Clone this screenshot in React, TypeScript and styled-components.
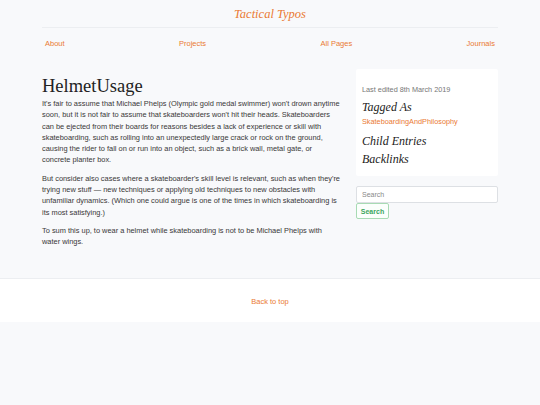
import * as React from 'react';
import styled, { createGlobalStyle } from 'styled-components';

const orange = '#ea7a33';

const Global = createGlobalStyle`
  html, body {
    margin: 0;
    padding: 0;
    background: #f8f9fb;
    font-family: 'Liberation Sans', Arial, sans-serif;
  }
`;

const Page = styled.div`
  min-height: 405px;
  background: #f8f9fb;
`;

const Container = styled.div`
  width: 456px;
  margin: 0 auto;
`;

const SiteTitle = styled.div`
  font-family: 'Liberation Serif', Georgia, serif;
  font-style: italic;
  font-size: 12.5px;
  color: ${orange};
  text-align: center;
  padding-top: 6px;
  height: 21px;
  line-height: 16px;
  border-bottom: 1px solid #eceef1;
`;

const Nav = styled.nav`
  display: flex;
  justify-content: space-between;
  padding: 11px 3px 0 3px;
  height: 19px;
`;

const NavLink = styled.a`
  font-size: 7.5px;
  color: ${orange};
  text-decoration: none;
  line-height: 10px;
`;

const Main = styled.div`
  display: flex;
  gap: 11px;
  padding-top: 11px;
  padding-bottom: 23px;
`;

const Article = styled.article`
  flex: 1;
  padding-top: 6px;
`;

const Heading = styled.h1`
  font-family: 'Liberation Serif', Georgia, serif;
  font-weight: normal;
  font-size: 18.5px;
  line-height: 22px;
  color: #222;
  margin: 0 0 1px 0;
`;

const Para = styled.p`
  font-size: 7.42px;
  line-height: 11.3px;
  color: #383838;
  margin: 0 0 7px 0;
  white-space: nowrap;
`;

const Sidebar = styled.aside`
  width: 142px;
  flex-shrink: 0;
`;

const Card = styled.div`
  background: #fff;
  padding: 15px 6px 7px 6px;
  border-radius: 2px;
`;

const Meta = styled.div`
  font-size: 7.3px;
  color: #777;
  line-height: 12px;
  margin-bottom: 3px;
`;

const SideHeading = styled.div`
  font-family: 'Liberation Serif', Georgia, serif;
  font-style: italic;
  font-size: 12px;
  line-height: 16px;
  color: #222;
  margin-bottom: 2px;
`;

const TagLink = styled.a`
  display: block;
  font-size: 7.3px;
  color: ${orange};
  text-decoration: none;
  line-height: 10px;
  margin-bottom: 6px;
`;

const SearchInput = styled.input`
  display: block;
  box-sizing: border-box;
  width: 142px;
  height: 17px;
  margin-top: 10px;
  border: 1px solid #dde0e4;
  border-radius: 2px;
  background: #fff;
  font-family: 'Liberation Sans', Arial, sans-serif;
  font-size: 7px;
  padding: 0 5px;
  outline: none;
  &::placeholder {
    color: #888;
  }
`;

const SearchButton = styled.button`
  display: block;
  height: 16px;
  width: 33px;
  padding: 0;
  border: 1px solid #a8dbb4;
  border-radius: 2px;
  background: #fbfffc;
  color: #3ba55c;
  font-family: 'Liberation Sans', Arial, sans-serif;
  font-weight: bold;
  font-size: 7px;
`;

const Footer = styled.footer`
  background: #fff;
  border-top: 1px solid #eceef1;
  height: 44px;
  box-sizing: border-box;
  padding-top: 4px;
  display: flex;
  align-items: center;
  justify-content: center;
`;

export default function App() {
  return (
    <Page>
      <Global />
      <Container>
        <SiteTitle>Tactical Typos</SiteTitle>
        <Nav>
          <NavLink href="#">About</NavLink>
          <NavLink href="#">Projects</NavLink>
          <NavLink href="#">All Pages</NavLink>
          <NavLink href="#">Journals</NavLink>
        </Nav>
        <Main>
          <Article>
            <Heading>HelmetUsage</Heading>
            <Para>
              It's fair to assume that Michael Phelps (Olympic gold medal swimmer) won't drown anytime<br />
              soon, but it is not fair to assume that skateboarders won't hit their heads. Skateboarders<br />
              can be ejected from their boards for reasons besides a lack of experience or skill with<br />
              skateboarding, such as rolling into an unexpectedly large crack or rock on the ground,<br />
              causing the rider to fall on or run into an object, such as a brick wall, metal gate, or<br />
              concrete planter box.
            </Para>
            <Para>
              But consider also cases where a skateboarder's skill level is relevant, such as when they're<br />
              trying new stuff — new techniques or applying old techniques to new obstacles with<br />
              unfamiliar dynamics. (Which one could argue is one of the times in which skateboarding is<br />
              its most satisfying.)
            </Para>
            <Para>
              To sum this up, to wear a helmet while skateboarding is not to be Michael Phelps with<br />
              water wings.
            </Para>
          </Article>
          <Sidebar>
            <Card>
              <Meta>Last edited 8th March 2019</Meta>
              <SideHeading>Tagged As</SideHeading>
              <TagLink href="#">SkateboardingAndPhilosophy</TagLink>
              <SideHeading>Child Entries</SideHeading>
              <SideHeading>Backlinks</SideHeading>
            </Card>
            <SearchInput placeholder="Search" />
            <SearchButton>Search</SearchButton>
          </Sidebar>
        </Main>
      </Container>
      <Footer>
        <NavLink href="#">Back to top</NavLink>
      </Footer>
    </Page>
  );
}
